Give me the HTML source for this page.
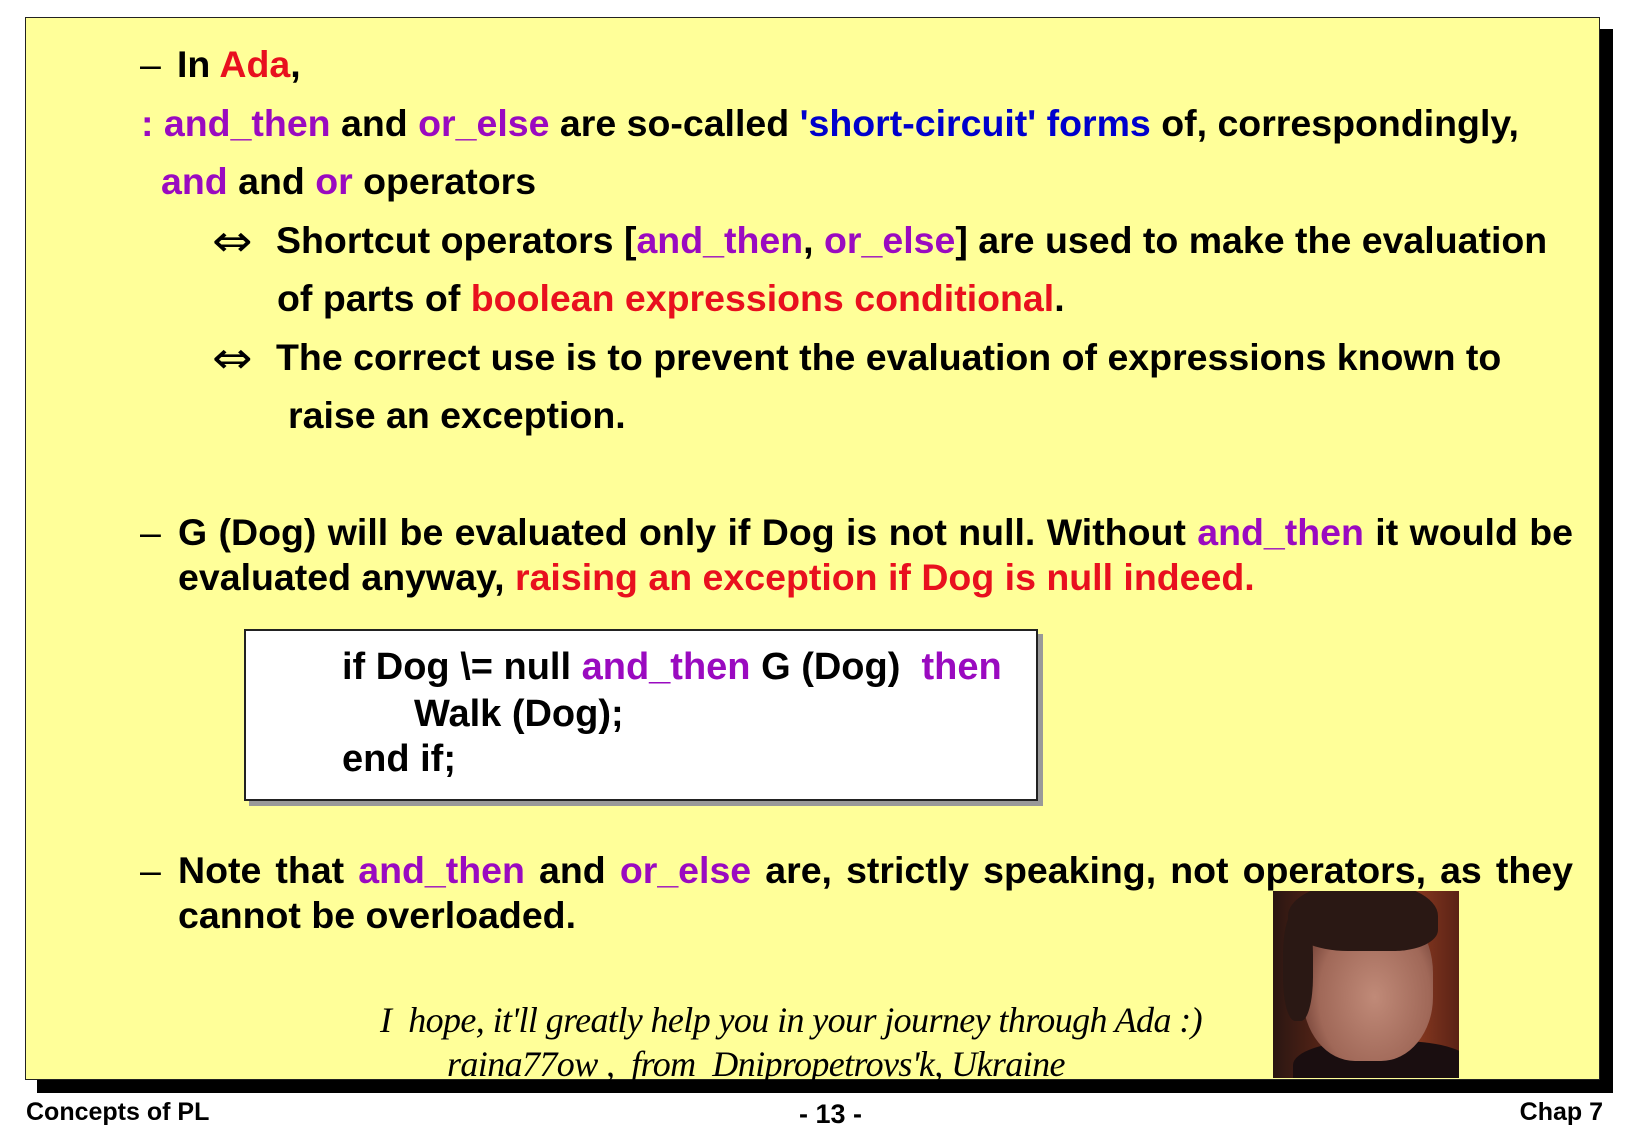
<!DOCTYPE html>
<html><head><meta charset="utf-8"><style>
body{margin:0;width:1625px;height:1125px;background:#fff;position:relative;overflow:hidden;font-family:"Liberation Sans",Arial,sans-serif;}
.shadow{position:absolute;left:37px;top:29px;width:1576px;height:1064px;background:#000;}
.slide{position:absolute;left:25px;top:17px;width:1573px;height:1061px;background:#ffff99;border:1px solid #222;}
.l{position:absolute;font-weight:bold;font-size:37.5px;line-height:44px;white-space:nowrap;color:#000;}
.p{color:#9a0ac0}.r{color:#e8101e}.b{color:#0000cc}
.j{white-space:normal;text-align:justify;text-align-last:justify;}
.ar{position:absolute;font-family:"DejaVu Sans",sans-serif;font-size:44px;line-height:44px;transform:scaleX(1.1);}
.code{position:absolute;left:244px;top:629px;width:790px;height:168px;background:#fff;border:2px solid #222;box-shadow:5px 5px 0 #999;}
.c{position:absolute;font-size:38px;line-height:44px;white-space:nowrap;font-weight:bold;}
.it{position:absolute;font-family:"Liberation Serif",serif;font-style:italic;font-size:36px;line-height:40px;white-space:nowrap;letter-spacing:-0.6px;}
.f{position:absolute;font-weight:bold;font-size:25px;line-height:28px;}
.photo{position:absolute;left:1273px;top:891px;width:186px;height:187px;overflow:hidden;background:linear-gradient(90deg,#2a1612 0%,#6a2a18 40%,#8a3a20 75%,#5a2216 100%);}
.photo div{position:absolute;}
</style></head><body>
<div class="shadow"></div>
<div class="slide"></div>
<div class="l" style="left:140px;top:42px;font-weight:normal">–</div>
<div class="l" style="left:177px;top:42px">In <span class="r">Ada</span>,</div>
<div class="l" style="left:141px;top:101px"><span class="p">: and_then</span> and <span class="p">or_else</span> are so-called <span class="b">'short-circuit' forms</span> of, correspondingly,</div>
<div class="l" style="left:161px;top:159px"><span class="p">and</span> and <span class="p">or</span> operators</div>
<div class="ar" style="left:214px;top:220px">⇔</div>
<div class="l" style="left:276px;top:218px">Shortcut operators [<span class="p">and_then</span>, <span class="p">or_else</span>] are used to make the evaluation</div>
<div class="l" style="left:277px;top:276px">of parts of <span class="r">boolean expressions conditional</span>.</div>
<div class="ar" style="left:214px;top:337px">⇔</div>
<div class="l" style="left:276px;top:335px">The correct use is to prevent the evaluation of expressions known to</div>
<div class="l" style="left:288px;top:393px">raise an exception.</div>
<div class="l" style="left:140px;top:510px;font-weight:normal">–</div>
<div class="l j" style="left:178px;top:510px;width:1395px">G (Dog) will be evaluated only if Dog is not null. Without <span class="p">and_then</span> it would be</div>
<div class="l" style="left:178px;top:555px">evaluated anyway, <span class="r">raising an exception if Dog is null indeed.</span></div>
<div class="code"></div>
<div class="c" style="left:342px;top:645px">if Dog \= null <span class="p">and_then</span> G (Dog)&nbsp; <span class="p">then</span></div>
<div class="c" style="left:414px;top:692px">Walk (Dog);</div>
<div class="c" style="left:342px;top:737px">end if;</div>
<div class="l" style="left:140px;top:848px;font-weight:normal">–</div>
<div class="l j" style="left:178px;top:848px;width:1395px">Note that <span class="p">and_then</span> and <span class="p">or_else</span> are, strictly speaking, not operators, as they</div>
<div class="l" style="left:178px;top:893px">cannot be overloaded.</div>
<div class="it" style="left:380px;top:1000px">I&nbsp; hope, it'll greatly help you in your journey through Ada :)</div>
<div class="it" style="left:447px;top:1044px">raina77ow ,&nbsp; from&nbsp; Dnipropetrovs'k, Ukraine</div>
<div class="photo">
<div style="left:20px;top:150px;width:180px;height:60px;background:#1a0e10;border-radius:40% 40% 0 0"></div>
<div style="left:30px;top:10px;width:130px;height:160px;background:radial-gradient(ellipse at 55% 60%,#c08a78 0%,#a06858 55%,#6a3a30 80%);border-radius:45% 45% 40% 40%"></div>
<div style="left:15px;top:-10px;width:150px;height:70px;background:#2a1814;border-radius:50% 50% 30% 40%"></div>
<div style="left:10px;top:20px;width:30px;height:110px;background:#2a1814;border-radius:40%"></div>
</div>
<div class="f" style="left:26px;top:1098px">Concepts of PL</div>
<div class="f" style="left:799px;top:1100px;font-size:27px">- 13 -</div>
<div class="f" style="right:22px;top:1098px">Chap 7</div>
</body></html>
